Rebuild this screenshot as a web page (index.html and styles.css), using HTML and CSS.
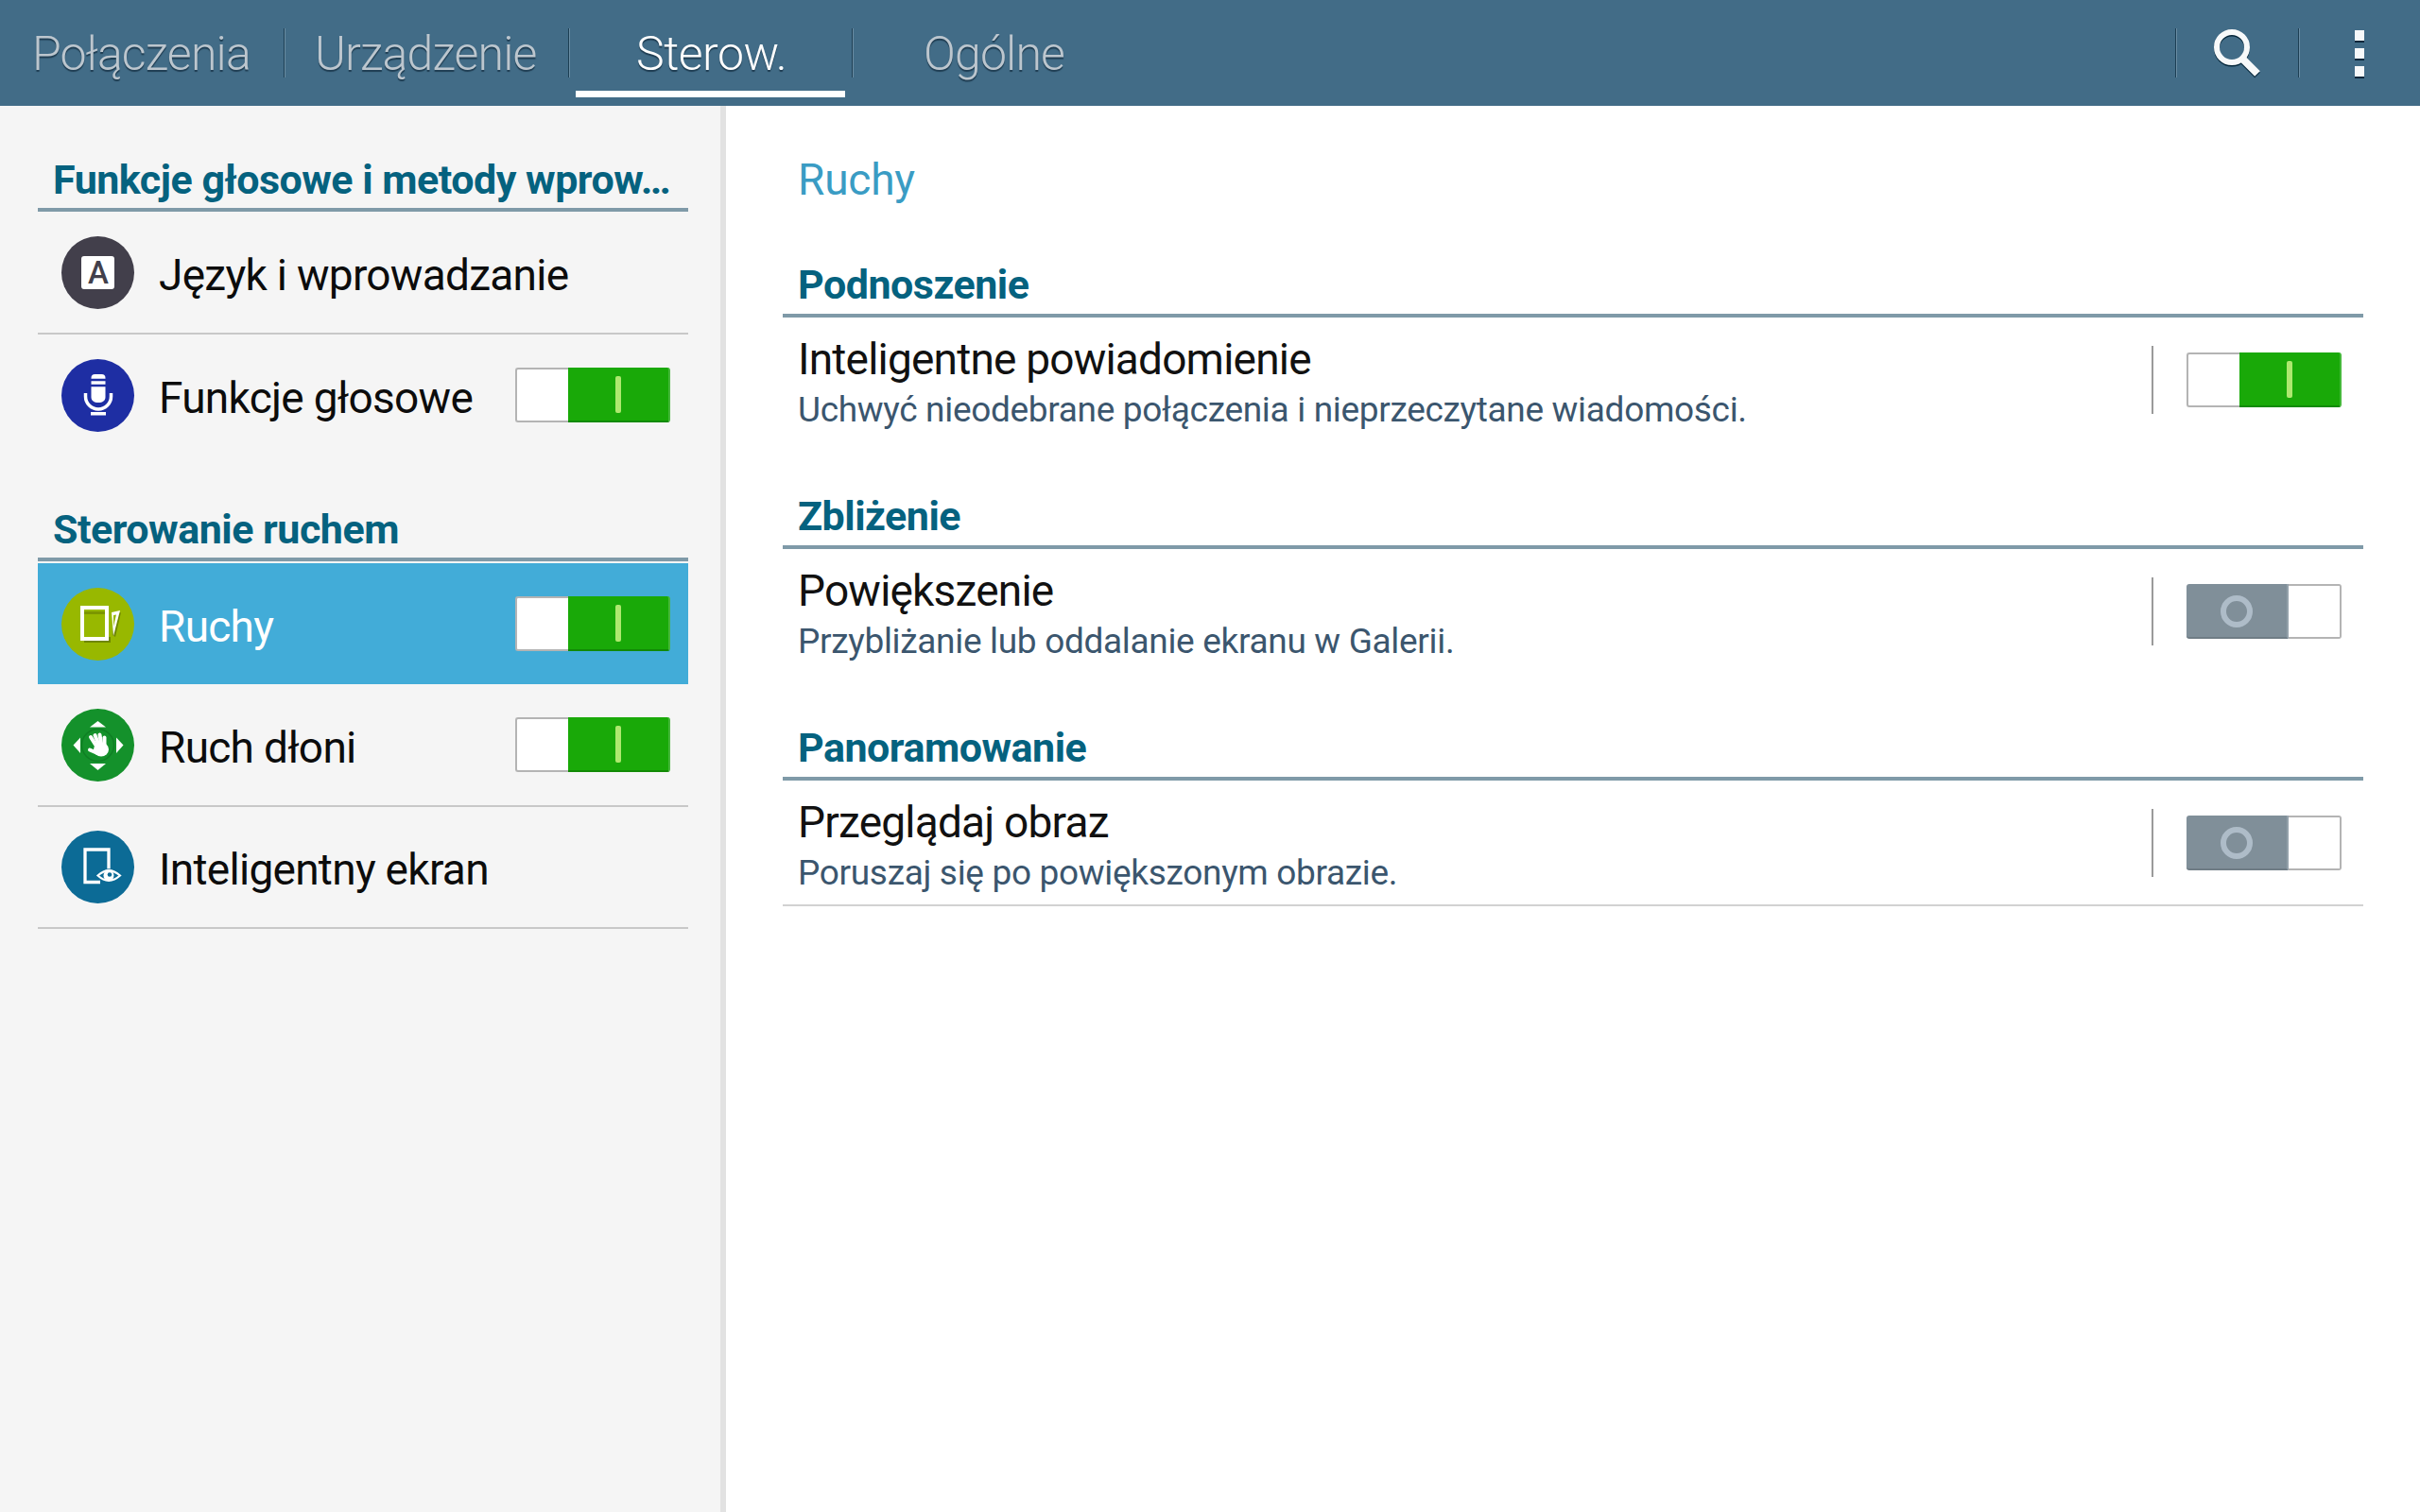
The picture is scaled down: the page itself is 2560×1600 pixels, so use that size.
FILE: index.html
```html
<!DOCTYPE html>
<html lang="pl">
<head>
<meta charset="utf-8">
<title>Ustawienia</title>
<link rel="stylesheet" href="styles.css">
</head>
<body>
<header class="topbar">
  <nav class="tabs">
    <div class="tab tab-a">Połączenia</div>
    <div class="tab tab-b">Urządzenie</div>
    <div class="tab tab-c active">Sterow.</div>
    <div class="tab tab-d">Ogólne</div>
  </nav>
  <div class="actions">
    <div class="action">
      <svg class="ico-search" width="60" height="60" viewBox="0 0 60 60"><g fill="none" stroke="#04263a" stroke-width="6" transform="translate(0 1.5)"><circle cx="25" cy="24" r="16"/><path d="M36 36 L52 52" stroke-width="8"/></g><g fill="none" stroke="#f7f9fa" stroke-width="6"><circle cx="25" cy="24" r="16"/><path d="M36 36 L52 52" stroke-width="8"/></g></svg>
    </div>
    <div class="action action-more">
      <span class="dot"></span><span class="dot"></span><span class="dot"></span>
    </div>
  </div>
</header>
<div class="content">
  <aside class="sidebar">
    <h2 class="side-head">Funkcje głosowe i metody wprow…</h2>
    <div class="side-row lined tall">
      <span class="badge b-lang"><svg width="77" height="77" viewBox="0 0 77 77"><rect x="21" y="21" width="35" height="35" rx="3" fill="#fff"/><text x="38.5" y="50" text-anchor="middle" class="badge-a">A</text></svg></span>
      <span class="side-label">Język i wprowadzanie</span>
    </div>
    <div class="side-row short">
      <span class="badge b-voice"><svg width="77" height="77" viewBox="0 0 77 77"><path d="M31.500 20a4 4 0 0 1 4-4h7a4 4 0 0 1 4 4v20c0 4-3 6-7.500 6s-7.500-2-7.500-6z" fill="#fff"/><path d="M31 22h16M31 28h16" stroke="#1e2ea3" stroke-width="2.500"/><path d="M25.500 36v3.500a13.500 13.500 0 0 0 27 0v-3.500" fill="none" stroke="#fff" stroke-width="3.500"/><rect x="31" y="56" width="16" height="3.500" fill="#fff"/></svg></span>
      <span class="side-label">Funkcje głosowe</span>
      <span class="switch on"><span class="knob-w"></span><span class="fill"><i class="bar"></i></span></span>
    </div>
    <h2 class="side-head">Sterowanie ruchem</h2>
    <div class="side-row selected">
      <span class="badge b-motion"><svg width="77" height="77" viewBox="0 0 77 77"><path d="M24 58h28v-6h-28z" fill="#6f8700"/><path d="M24 25h22v3h-22z" fill="#7c9600"/><path d="M55 29 L63 26 L57 52 L54 50 Z" fill="#6f8700"/><rect x="22" y="21" width="26" height="33" fill="none" stroke="#fff" stroke-width="4"/><path d="M53 26 L62 24 L55 51 Z" fill="#fff"/><path d="M55 29 L58 28.500 L55 41 Z" fill="#98b800"/></svg></span>
      <span class="side-label">Ruchy</span>
      <span class="switch on"><span class="knob-w"></span><span class="fill"><i class="bar"></i></span></span>
    </div>
    <div class="side-row lined tall">
      <span class="badge b-palm"><svg width="77" height="77" viewBox="0 0 77 77"><g fill="#fff"><path d="M30 19.500 L38.500 13 L47 19.500 Z"/><path d="M30 58 L38.500 65 L47 58 Z"/><path d="M20 30.500 L12.500 38.500 L20 47 Z"/><path d="M58 30.500 L65.500 38.500 L58 47 Z"/></g><circle cx="38.500" cy="38.500" r="17" fill="none" stroke="#0f7f24" stroke-width="1.500"/><g fill="none" stroke="#fff" stroke-width="4" stroke-linecap="round"><path d="M36 38 L31 30"/><path d="M39 37 L35.500 28"/><path d="M42 37 L40.500 27.500"/><path d="M45.500 38 L45.500 30.500"/><path d="M38 47 L30 43.500"/></g><ellipse cx="42" cy="43" rx="8" ry="7.500" fill="#fff"/></svg></span>
      <span class="side-label">Ruch dłoni</span>
      <span class="switch on"><span class="knob-w"></span><span class="fill"><i class="bar"></i></span></span>
    </div>
    <div class="side-row lined">
      <span class="badge b-smart"><svg width="77" height="77" viewBox="0 0 77 77"><path d="M41 54.500 H25 V20 H50 V42" fill="none" stroke="#fff" stroke-width="3.300"/><path d="M35 47.500 Q50 33 65 47.500 Q50 62 35 47.500 Z" fill="#0c6b96"/><path d="M38.500 47.500 Q50 37 62 47.500 Q50 58 38.500 47.500 Z" fill="none" stroke="#fff" stroke-width="2.200"/><circle cx="50" cy="47.500" r="5.500" fill="#fff"/><circle cx="51" cy="46.500" r="2.300" fill="#0c6b96"/></svg></span>
      <span class="side-label">Inteligentny ekran</span>
    </div>
  </aside>
  <main class="detail">
    <h1 class="detail-title">Ruchy</h1>
    <section class="group">
      <h3 class="group-head">Podnoszenie</h3>
      <div class="setting">
        <div class="setting-text">
          <div class="setting-name">Inteligentne powiadomienie</div>
          <div class="setting-desc">Uchwyć nieodebrane połączenia i nieprzeczytane wiadomości.</div>
        </div>
        <span class="vsep"></span>
        <span class="switch on"><span class="knob-w"></span><span class="fill"><i class="bar"></i></span></span>
      </div>
    </section>
    <section class="group">
      <h3 class="group-head">Zbliżenie</h3>
      <div class="setting">
        <div class="setting-text">
          <div class="setting-name">Powiększenie</div>
          <div class="setting-desc">Przybliżanie lub oddalanie ekranu w Galerii.</div>
        </div>
        <span class="vsep"></span>
        <span class="switch off"><span class="fill"><i class="ring"></i></span><span class="knob-w"></span></span>
      </div>
    </section>
    <section class="group">
      <h3 class="group-head">Panoramowanie</h3>
      <div class="setting last">
        <div class="setting-text">
          <div class="setting-name">Przeglądaj obraz</div>
          <div class="setting-desc">Poruszaj się po powiększonym obrazie.</div>
        </div>
        <span class="vsep"></span>
        <span class="switch off"><span class="fill"><i class="ring"></i></span><span class="knob-w"></span></span>
      </div>
    </section>
  </main>
</div>
</body>
</html>
```

FILE: styles.css
```css
* { box-sizing: border-box; }
html, body { margin: 0; padding: 0; }
body {
  width: 2560px;
  height: 1600px;
  overflow: hidden;
  background: #fff;
  font-family: Roboto, "Liberation Sans", sans-serif;
  display: flex;
  flex-direction: column;
}
.topbar {
  height: 112px;
  flex: none;
  background: #426c87;
  display: flex;
  justify-content: space-between;
}
.tabs { display: flex; height: 112px; }
.tab {
  position: relative;
  height: 112px;
  display: flex;
  align-items: center;
  font-size: 50px;
  font-weight: 300;
  letter-spacing: -0.85px;
  color: #bcc6ce;
  text-shadow: 0 2px 1px #1f3d52;
  padding-top: 2px;
}
.tab::after {
  content: "";
  position: absolute;
  right: 0;
  top: 30px;
  width: 1px;
  height: 52px;
  background: #1d3f54;
  box-shadow: 1px 0 0 #6b8ea4;
}
.tab-a { width: 301px; padding-left: 34px; }
.tab-b { width: 301px; padding-left: 32px; }
.tab-c { width: 300px; padding-left: 71px; }
.tab-d { width: 300px; padding-left: 75px; }
.tab-d::after { display: none; }
.active { color: #fff; letter-spacing: -0.5px; }
.active::before {
  content: "";
  position: absolute;
  left: 7px;
  right: 8px;
  top: 96px;
  height: 7px;
  background: #fff;
}
.actions { display: flex; }
.action {
  width: 130px;
  height: 112px;
  position: relative;
  display: flex;
  align-items: center;
  justify-content: center;
}
.action::before {
  content: "";
  position: absolute;
  left: 0;
  top: 30px;
  width: 1px;
  height: 52px;
  background: #1d3f54;
  box-shadow: 1px 0 0 #6b8ea4;
}
.action-more {
  width: 129px;
  flex-direction: column;
  gap: 8px;
}
.dot {
  width: 10px;
  height: 11px;
  background: #f7f9fa;
  box-shadow: 0 2px 0 #04263a;
}
.content { flex: 1; display: flex; min-height: 0; }
.sidebar {
  width: 768px;
  flex: none;
  background: #f5f5f5;
  border-right: 6px solid #e2e2e2;
  padding: 0 34px 0 40px;
}
.side-head {
  margin: 0;
  height: 112px;
  padding: 48px 0 0 16px;
  font-size: 43px;
  line-height: 60px;
  font-weight: 700;
  letter-spacing: -0.5px;
  color: #05627f;
  border-bottom: 4px solid #7f9aa8;
  white-space: nowrap;
}
.side-row {
  height: 129px;
  display: flex;
  align-items: center;
  padding-left: 25px;
  padding-right: 19px;
  font-size: 46px;
  letter-spacing: -0.72px;
  color: #0c0c0c;
}
.side-row.tall { height: 130px; }
.side-row.short { height: 128px; }
.side-row.lined { border-bottom: 2px solid #c8c8c8; }
.side-row.selected {
  background: #42acd8;
  color: #fff;
  height: 128px;
  margin-top: 2px;
}
.badge {
  width: 77px;
  height: 77px;
  border-radius: 50%;
  flex: none;
  display: block;
}
.badge svg { display: block; }
.b-lang { background: #423f4b; }
.b-voice { background: #1e2ea3; }
.b-motion { background: #98b800; }
.b-palm { background: #14912b; }
.b-smart { background: #0c6b96; }
.badge-a { font: 500 33px Roboto, sans-serif; fill: #423f4b; }
.side-label { margin-left: 26px; padding-top: 5px; flex: 1; white-space: nowrap; }
.switch {
  width: 164px;
  height: 58px;
  flex: none;
  display: flex;
  border-radius: 3px;
}
.knob-w {
  flex: 1;
  background: #fff;
  border: 2px solid #b4b4b4;
}
.on .knob-w { border-right: 0; border-radius: 3px 0 0 3px; }
.off .knob-w { border-left: 0; border-radius: 0 3px 3px 0; }
.fill {
  width: 108px;
  flex: none;
  display: flex;
  align-items: center;
  justify-content: center;
}
.on .fill {
  background: #19a908;
  border-right: 2px solid #45b83a;
  border-bottom: 2px solid #128a05;
  border-radius: 0 3px 3px 0;
}
.off .fill {
  background: #808f99;
  border-right: 2px solid #95a2ab;
  border-bottom: 2px solid #6f7c85;
  border-radius: 3px 0 0 3px;
  padding-top: 2px;
}
.bar {
  width: 6px;
  height: 39px;
  border-radius: 2px;
  background: #aee86f;
}
.ring {
  width: 34px;
  height: 34px;
  border-radius: 50%;
  border: 6px solid #aebcc8;
}
.detail {
  flex: 1;
  padding: 0 60px;
}
.detail-title {
  margin: 0;
  height: 103px;
  padding: 48px 0 0 16px;
  font-size: 46px;
  line-height: 60px;
  font-weight: 400;
  letter-spacing: -0.2px;
  color: #3a9cc4;
}
.group-head {
  margin: 0;
  height: 121px;
  padding: 58px 0 0 16px;
  font-size: 43px;
  line-height: 56px;
  font-weight: 700;
  letter-spacing: -0.5px;
  color: #05627f;
  border-bottom: 4px solid #7f9aa8;
}
.setting {
  height: 124px;
  display: flex;
  align-items: flex-start;
  padding: 14px 23px 0 16px;
}
.setting.last { height: 133px; border-bottom: 2px solid #d2d2d2; }
.setting-text { flex: 1; }
.setting-name { font-size: 46px; line-height: 60px; letter-spacing: -0.8px; color: #111; }
.setting-desc { font-size: 37px; line-height: 44px; letter-spacing: -0.32px; color: #3b566e; padding-top: 2px; }
.vsep { width: 2px; height: 72px; background: #9a9a9a; margin: 16px 35px 0 0; flex: none; }
.setting .switch { margin-top: 23px; }
```
